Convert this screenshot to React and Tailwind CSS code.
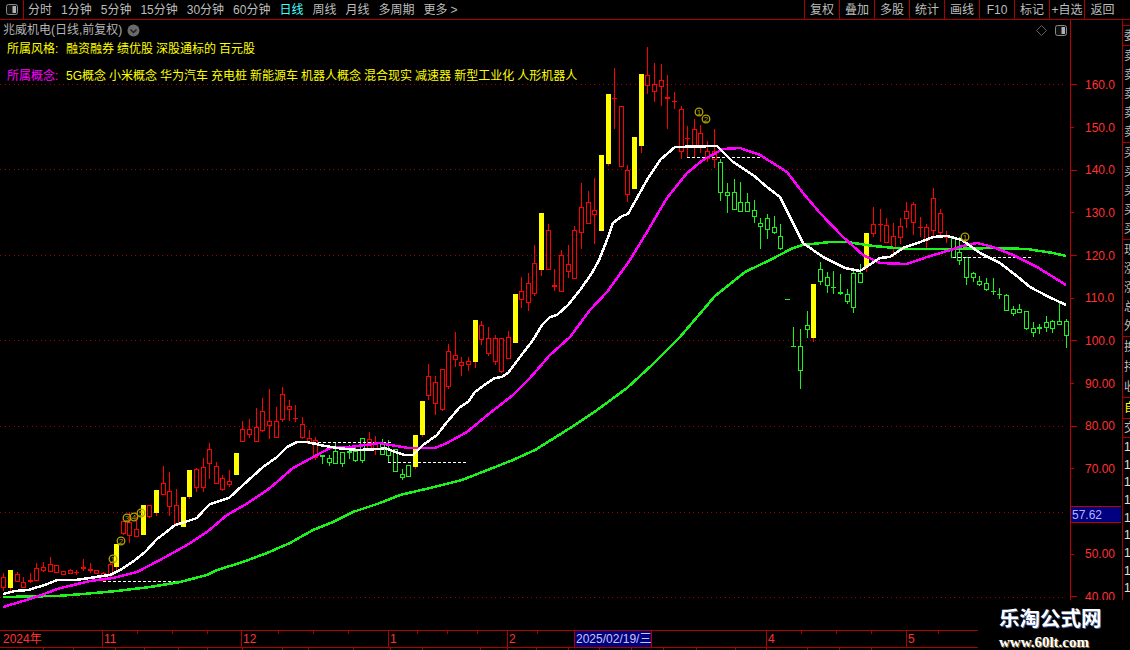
const red = '#ff0000';
const green = '#1cf21c';

const tabs = ['分时', '1分钟', '5分钟', '15分钟', '30分钟', '60分钟', '日线', '周线', '月线', '多周期', '更多'];
const tools = ['复权', '叠加', '多股', '统计', '画线', 'F10', '标记', '+自选'];
const styles = ['融资融券', '绩优股', '深股通标的', '百元股'];
const concepts = ['5G概念', '小米概念', '华为汽车', '充电桩', '新能源车', '机器人概念', '混合现实', '减速器', '新型工业化', '人形机器人'];
const axis = ['160.0', '150.0', '140.0', '130.0', '120.0', '110.0', '100.0', '90.00', '80.00', '70.00', '', '50.00', '40.00'];
const gridY = [84.5, 169.5, 255.5, 340.5, 426.5, 512.5, 597.5];

// [wick top, body top, body bottom, wick bottom, kind] measured on 3x crops, each group has its own y origin
const candleGroups = [
  [380, [
    [578, 590, 622, 632, 'r'], [570, 570, 624, 640, 'y'], [575, 583, 602, 605, 'r'], [592, 606, 620, 620, 'r'],
    [580, 601, 607, 609, 'r'], [550, 565, 601, 604, 'r'], [545, 562, 569, 576, 'r'], [532, 553, 572, 575, 'r'],
    [556, 556, 575, 578, 'r'], [573, 573, 581, 584, 'r'], [568, 571, 579, 583, 'r'], [570, 576, 578, 585, 'r'],
    [538, 561, 566, 572, 'r'], [550, 567, 572, 578, 'r'], [570, 570, 578, 583, 'r'], [575, 580, 601, 604, 'r'],
    [545, 553, 584, 590, 'r'], [492, 492, 560, 570, 'y'], [423, 423, 458, 465, 'r'], [395, 426, 466, 488, 'r'],
    [410, 448, 467, 470, 'r'], [375, 375, 464, 464, 'y'], [376, 376, 407, 415, 'r'], [330, 330, 398, 407, 'y'],
    [258, 310, 341, 345, 'r'], [276, 334, 377, 407, 'r'], [327, 376, 428, 435, 'r'], [351, 351, 441, 441, 'y'],
    [270, 270, 351, 356, 'y'], [265, 268, 320, 335, 'r'], [235, 262, 322, 335, 'r'], [190, 208, 248, 297, 'r'],
    [246, 259, 308, 312, 'r'], [285, 295, 328, 332, 'r'], [270, 304, 311, 320, 'r'], [219, 219, 285, 285, 'y'],
    [124, 148, 182, 182, 'r'], [117, 148, 163, 175, 'r'], [84, 141, 182, 183, 'r'], [54, 94, 149, 157, 'r'],
    [27, 124, 134, 177, 'r'], [81, 124, 170, 174, 'r'], [21, 43, 116, 125, 'r'], [60, 79, 88, 122, 'r'],
    [75, 115, 117, 125, 'r'], [112, 133, 170, 176, 'r'], [150, 175, 190, 190, 'r'], [170, 179, 232, 240, 'r'],
    [224, 224, 232, 252, 'g'], [225, 235, 247, 258, 'g'], [190, 213, 248, 249, 'g'], [217, 217, 250, 261, 'g'],
    [195, 213, 220, 238, 'g'], [205, 213, 241, 246, 'g'], [175, 175, 239, 248, 'g'], [156, 178, 206, 213, 'r'],
    [168, 187, 205, 225, 'r'],
  ]],
  [260, [
    [537, 547, 581, 585, 'g'], [540, 568, 584, 606, 'g'], [568, 568, 632, 635, 'g'], [628, 643, 650, 660, 'g'],
    [615, 615, 648, 652, 'g'], [525, 525, 620, 628, 'y'], [423, 423, 525, 530, 'y'], [312, 349, 406, 420, 'r'],
    [348, 367, 428, 465, 'r'], [327, 327, 446, 452, 'r'], [252, 274, 379, 387, 'r'], [216, 286, 296, 320, 'r'],
    [292, 307, 316, 348, 'r'], [292, 304, 311, 333, 'r'], [180, 180, 305, 324, 'y'], [183, 196, 238, 255, 'r'],
    [200, 235, 278, 288, 'r'], [225, 235, 302, 315, 'r'], [235, 235, 334, 338, 'r'], [213, 232, 295, 297, 'r'],
    [102, 102, 248, 248, 'y'], [52, 94, 118, 145, 'r'], [40, 70, 127, 153, 'r'],
  ]],
  [90, [
    [465, 520, 610, 617, 'r'], [369, 369, 540, 558, 'y'], [402, 421, 538, 538, 'r'], [538, 585, 590, 603, 'r'],
    [480, 496, 602, 602, 'r'], [465, 523, 544, 563, 'r'], [408, 421, 563, 567, 'r'], [279, 352, 427, 477, 'r'],
    [304, 337, 398, 400, 'r'], [264, 361, 371, 462, 'r'],
  ]],
  [40, [
    [345, 345, 572, 572, 'y'], [162, 162, 372, 378, 'y'], [84, 175, 178, 267, 'r'], [198, 199, 377, 378, 'r'],
    [376, 391, 463, 485, 'r'], [291, 291, 446, 446, 'y'], [102, 102, 318, 338, 'y'], [21, 106, 134, 162, 'r'],
    [70, 133, 152, 185, 'r'], [72, 121, 137, 197, 'r'], [105, 172, 176, 267, 'r'], [155, 183, 185, 208, 'r'],
    [198, 208, 334, 357, 'r'], [258, 294, 297, 352, 'r'], [237, 268, 316, 352, 'r'], [255, 280, 316, 340, 'r'],
    [303, 334, 355, 365, 'r'], [267, 334, 358, 383, 'r'], [358, 367, 455, 482, 'g'], [430, 455, 464, 518, 'g'],
    [418, 457, 506, 510, 'g'], [427, 487, 512, 516, 'g'], [460, 487, 512, 516, 'g'], [480, 511, 527, 549, 'g'],
    [534, 550, 559, 627, 'g'], [522, 535, 566, 597, 'g'], [529, 562, 575, 581, 'g'], [552, 589, 623, 630, 'g'],
  ]],
  [180, [
    [358, 358, 358, 358, 'g'], [441, 498, 500, 500, 'g'], [447, 499, 571, 628, 'g'], [393, 436, 446, 473, 'g'],
    [312, 312, 473, 485, 'y'], [246, 268, 304, 315, 'g'], [276, 292, 314, 338, 'g'], [272, 322, 325, 342, 'g'],
    [282, 337, 341, 345, 'g'], [327, 343, 364, 373, 'g'], [270, 280, 382, 400, 'g'], [252, 280, 307, 310, 'g'],
    [159, 159, 262, 275, 'y'], [82, 133, 160, 170, 'r'], [88, 132, 135, 185, 'r'], [114, 136, 185, 190, 'r'],
    [130, 167, 202, 230, 'r'], [114, 139, 172, 192, 'r'], [66, 94, 115, 145, 'r'], [66, 73, 127, 165, 'r'],
    [112, 140, 142, 170, 'r'], [132, 140, 179, 205, 'r'], [24, 55, 150, 167, 'r'], [88, 100, 157, 165, 'r'],
    [152, 170, 172, 190, 'r'], [172, 175, 230, 230, 'g'], [170, 216, 241, 255, 'g'], [232, 232, 290, 315, 'g'],
    [275, 280, 292, 305, 'g'], [288, 304, 311, 318, 'g'], [294, 310, 327, 332, 'g'], [295, 332, 335, 345, 'g'],
    [325, 343, 346, 358, 'g'], [343, 345, 389, 393, 'g'], [378, 388, 400, 408, 'g'], [372, 388, 397, 400, 'g'],
    [394, 394, 443, 450, 'g'], [425, 444, 457, 470, 'g'], [433, 440, 446, 462, 'g'], [407, 427, 440, 455, 'g'],
    [420, 424, 443, 458, 'g'], [365, 424, 433, 433, 'g'], [418, 424, 466, 503, 'g'],
  ]],
];

const candles = candleGroups.flatMap(([y0, rows]) =>
  rows.map(([h, t, b, l, k]) => ({
    high: Math.round(y0 + h / 3),
    top: Math.round(y0 + t / 3),
    bottom: Math.round(y0 + b / 3),
    low: Math.round(y0 + l / 3),
    kind: k,
  })),
);

const whiteMa = '3,594 15,591 28,590 45,585 57,580 75,580 90,578 102,576 110,575 122,569 135,560 145,552 157,539 165,533 175,525 185,522 197,518 204,510 210,504 229,498 243,485 263,467 277,457 287,447 297,442 307,442 320,445 337,448 357,450 380,449 385,448 398,453 405,455 413,455 423,445 437,435 447,422 460,407 468,402 475,392 483,386 495,378 502,377 508,373 520,357 533,340 542,325 550,317 557,315 568,305 580,290 592,273 599,260 607,240 613,223 622,216 628,214 647,180 660,160 675,147 717,146 733,162 753,175 767,187 780,197 793,223 803,243 823,257 845,268 860,271 880,258 890,257 903,248 923,241 933,237 947,236 962,240 980,253 1000,263 1018,277 1030,287 1047,296 1066,305';
const magentaMa = '3,607 33,598 47,593 57,589 90,581 113,578 137,572 160,560 187,545 207,532 227,515 248,503 270,488 293,468 317,455 330,448 350,447 380,443 385,444 408,448 435,448 447,443 467,432 490,413 513,395 530,378 550,355 570,337 590,310 607,292 630,260 647,232 667,198 687,173 703,160 723,149 740,148 760,155 787,172 803,193 820,213 843,237 863,255 880,263 907,264 927,257 947,251 963,246 977,243 993,247 1013,255 1037,267 1066,285';
const greenMa = '3,597 57,596 83,594 117,591 150,587 180,582 207,575 217,570 240,563 267,553 290,543 313,530 333,522 353,512 380,503 400,495 430,488 462,480 513,460 535,450 567,430 593,413 627,388 652,365 680,337 715,296 745,272 770,260 793,248 803,245 830,242 847,242 873,246 907,249 953,249 993,248 1027,249 1053,253 1066,256';

const dashes = [
  [103, 182, 581.5],
  [303, 393, 442.5],
  [388, 467, 462.5],
  [687, 767, 157.5],
  [953, 1032, 257.5],
];

const marks = [
  [113, 559, '1'], [121, 541, '2'], [127, 518, '3'], [134, 517, '4'], [141, 513, '5'],
  [699, 112, '1'], [706, 119, '2'], [965, 237, '1'],
];

const topTicks = [137, 172, 207, 278, 313, 348, 417, 447, 477, 537, 801, 836, 871, 938];
const bottomTicks = [43, 73, 115, 144, 178, 207, 242, 282, 308, 353, 390, 422, 480, 507, 536, 568, 599, 631, 663, 696, 735, 766, 807, 839, 871];

const stripGroups = [
  { cls: 'h-[20px]', rows: ['委比'] },
  { cls: 'h-[97px]', rows: ['卖五', '卖四', '卖三', '卖二', '卖一'] },
  { cls: 'h-[97px]', rows: ['买一', '买二', '买三', '买四', '买五'] },
  { cls: 'h-[97px]', rows: ['现价', '涨跌', '涨幅', '总手', '外盘'] },
  { cls: 'h-[61px]', rows: ['换手', '持股', '收益'] },
];

function Candle({ c, i }) {
  const x = Math.round(3.3 + 6.64 * i);
  if (c.kind === 'y') {
    return (
      <g fill="#ffff00">
        <rect x={x} y={c.high} width="1" height={Math.max(c.low - c.high, 1)} fill={red} />
        <rect x={x - 2} y={c.top} width="5" height={c.bottom - c.top} />
      </g>
    );
  }
  const color = c.kind === 'r' ? red : green;
  const flat = c.bottom - c.top <= 2;
  return (
    <g>
      <rect x={x} y={c.high} width="1" height={Math.max(c.low - c.high, 1)} fill={color} />
      {flat ? (
        <rect x={x - 2} y={c.top} width="5" height={Math.max(c.bottom - c.top, 1)} fill={color} />
      ) : (
        <rect x={x - 1.5} y={c.top + 0.5} width="4" height={c.bottom - c.top} fill="#000" stroke={color} />
      )}
    </g>
  );
}

function PanelIcon({ className }) {
  return (
    <svg className={className} width="12" height="11" viewBox="0 0 12 11">
      <rect x="0.5" y="0.5" width="11" height="10" rx="2" fill="#111" stroke="#8a8a8a" />
      <rect x="6.5" y="2" width="3.5" height="7" fill="#b0b0b0" />
    </svg>
  );
}

function KChart() {
  return (
    <svg className="block" width="1070" height="610" viewBox="0 20 1070 610">
      <g shapeRendering="crispEdges">
        {gridY.map((y) => (
          <line key={y} x1="0" x2="1067" y1={y} y2={y} stroke="#a00000" strokeDasharray="1 3.5" />
        ))}
        {candles.map((c, i) => (
          <Candle key={i} c={c} i={i} />
        ))}
        {dashes.map(([x1, x2, y]) => (
          <line key={x1} x1={x1} x2={x2} y1={y} y2={y} stroke="#fff" strokeDasharray="3 2" />
        ))}
        <polyline points={greenMa} fill="none" stroke="#1cf21c" strokeWidth="2.5" />
        <polyline points={magentaMa} fill="none" stroke="#ff00ff" strokeWidth="2.5" />
        <polyline points={whiteMa} fill="none" stroke="#ffffff" strokeWidth="2.5" />
      </g>
      {marks.map(([x, y, n]) => (
        <g key={`${x}-${y}`}>
          <circle cx={x} cy={y} r="3.8" fill="none" stroke="#b3a300" strokeWidth="1.3" />
          <text x={x} y={y + 3} textAnchor="middle" fontSize="8" fill="#b3a300" fontFamily="Liberation Sans">
            {n}
          </text>
        </g>
      ))}
    </svg>
  );
}

export default function App() {
  return (
    <div className="w-[1130px] h-[650px] bg-black overflow-hidden relative text-[12px] font-['Liberation_Sans','Noto_Sans_CJK_SC',sans-serif] text-[#bdbdbd]">
      {/* toolbar */}
      <div className="h-[20px] flex items-center border-b border-[#a80000] leading-none">
        <div className="w-[24px] h-[19px] flex items-center justify-center border-r border-[#a80000] shrink-0">
          <PanelIcon />
        </div>
        <div className="flex items-center gap-[9px] pl-[4px] flex-1">
          {tabs.map((t) => (
            <span key={t} className={t === '日线' ? 'text-[#40ffff]' : ''}>
              {t}
              {t === '更多' && <span className="ml-[3px]">&gt;</span>}
            </span>
          ))}
        </div>
        {tools.map((t) => (
          <div key={t} className="w-[35px] h-[19px] flex items-center justify-center border-l border-[#a80000] whitespace-nowrap shrink-0">
            {t}
          </div>
        ))}
        <div className="w-[46px] h-[19px] flex items-center justify-center pr-[10px] border-l border-[#a80000] shrink-0">返回</div>
      </div>

      {/* chart, price axis, quote strip */}
      <div className="h-[610px] flex">
        <div className="w-[1070px] relative shrink-0">
          <KChart />
          <div className="absolute left-0 top-0 w-full">
            <div className="h-[19px] flex items-center pl-[3px] text-[#b4b4b4] pt-[1px]">
              <span>兆威机电(日线,前复权)</span>
              <svg className="ml-[5px]" width="13" height="13" viewBox="0 0 13 13">
                <circle cx="6.5" cy="6.5" r="6" fill="#6a6a6a" />
                <path d="M3.5 5.5 L6.5 8.5 L9.5 5.5" fill="none" stroke="#1c1c1c" strokeWidth="1.4" />
              </svg>
              <svg className="ml-auto mr-[8px]" width="11" height="11" viewBox="0 0 11 11">
                <path d="M5.5 0.5 L10.5 5.5 L5.5 10.5 L0.5 5.5 Z" fill="none" stroke="#5f5f5f" />
              </svg>
              <PanelIcon className="mr-[3px]" />
            </div>
            <div className="flex gap-[3px] pl-[7px] pt-[1px] h-[18px] items-center text-[#ffff00]">
              <span className="w-[56px]">所属风格:</span>
              {styles.map((s) => (
                <span key={s}>{s}</span>
              ))}
            </div>
            <div className="flex gap-[3px] pl-[7px] mt-[10px] h-[18px] items-center text-[#ffff00]">
              <span className="w-[56px] text-[#ff00ff]">所属概念:</span>
              {concepts.map((s) => (
                <span key={s}>{s}</span>
              ))}
            </div>
          </div>
        </div>

        <div className="w-[52px] shrink-0 border-l border-[#c00000] pt-[43.67px] relative text-[#ff3232]">
          {axis.map((label, i) => (
            <div key={i} className="h-[42.67px] flex items-center">
              <div className="w-[14px] shrink-0">
                <div className={i % 2 === 0 ? 'w-[6px] h-px bg-[#c00000]' : 'w-[3px] h-px bg-[#c00000]'} />
              </div>
              <span>{label}</span>
            </div>
          ))}
          <div className="absolute left-0 top-[486px] w-[50px] h-[17px] bg-[#000080] border-y border-[#c00000] flex items-center pl-[1px] text-[#b4b4ff]">
            57.62
          </div>
        </div>

        <div className="w-[8px] shrink-0 border-l border-[#a80000] overflow-hidden whitespace-nowrap pl-[1px]">
          <div className="h-[6px] -ml-[1px] border-b border-[#a80000]" />
          {stripGroups.map((g) => (
            <div key={g.rows[0]} className={`${g.cls} -ml-[1px] pl-[1px] border-b border-[#a80000] flex flex-col justify-around leading-none`}>
              {g.rows.map((r) => (
                <div key={r}>{r}</div>
              ))}
            </div>
          ))}
          <div className="h-[21px] -ml-[1px] pl-[1px] border-b border-[#a80000] flex items-center text-[#ffff00]">自选</div>
          <div className="h-[19px] -ml-[1px] pl-[1px] border-b border-[#a80000] flex items-center">交易</div>
          {[0, 1, 2, 3, 4, 5, 6, 7, 8].map((n) => (
            <div key={n} className="h-[17.7px] flex items-center text-[#e0e0e0] leading-none">
              1
            </div>
          ))}
        </div>
      </div>

      {/* date axis */}
      <div className="h-[18px] border-y border-[#b00000] flex text-[#ff3232] relative leading-none">
        <div className="w-[102px] flex items-center pl-[3px]">2024年</div>
        <div className="w-[139px] flex items-center pl-[1px] border-l border-[#b00000]">11</div>
        <div className="w-[147px] flex items-center pl-[1px] border-l border-[#b00000]">12</div>
        <div className="w-[119px] flex items-center pl-[1px] border-l border-[#b00000]">1</div>
        <div className="w-[67px] flex items-center pl-[1px] border-l border-[#b00000]">2</div>
        <div className="w-[78px] flex items-center pl-[1px] bg-[#000080] border-x border-[#b00000] text-[#c8c8e8] whitespace-nowrap">2025/02/19/三</div>
        <div className="w-[114px]" />
        <div className="w-[140px] flex items-center pl-[1px] border-l border-[#b00000]">4</div>
        <div className="w-[72px] flex items-center pl-[1px] border-l border-[#b00000]">5</div>
        <svg className="absolute left-0 top-0" width="978" height="3">
          {topTicks.map((x) => (
            <rect key={x} x={x} y="0" width="1" height="3" fill="#b00000" />
          ))}
        </svg>
      </div>
      <svg className="block" width="978" height="2">
        {bottomTicks.map((x) => (
          <rect key={x} x={x} y="0" width="1" height="2" fill="#b00000" />
        ))}
      </svg>

      {/* watermark */}
      <div className="absolute left-[978px] top-[600px] w-[152px] h-[50px] bg-black flex flex-col items-start pl-[21px] pt-[9px] leading-none">
        <div className="text-[20.5px] font-bold text-white [text-shadow:1px_1px_0_#3f5f9f] whitespace-nowrap">乐淘公式网</div>
        <div className="mt-[5px] text-[15px] font-bold font-['Liberation_Serif',serif] text-white [text-shadow:1px_1px_0_#8a6a3a]">www.60lt.com</div>
      </div>
    </div>
  );
}
